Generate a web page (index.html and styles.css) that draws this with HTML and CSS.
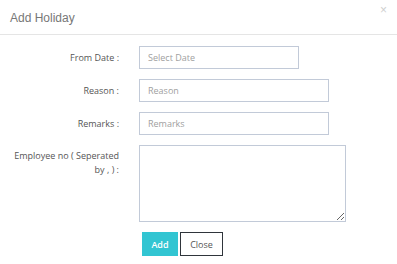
FILE: index.html
```
<!DOCTYPE html>
<html lang="en">
<head>
    <meta charset="UTF-8">
    <title>Add Holiday</title>
    <link rel="stylesheet" href="styles.css">
</head>
<body>

    <div class="modal">
        <div class="modal-header">
            <h4 class="modal-title">Add Holiday</h4>
            <button class="close" type="button">&times;</button>
        </div>

        <form class="modal-body">
            <label class="form-label">From Date :</label>
            <input class="form-input date" type="text" placeholder="Select Date">

            <label class="form-label">Reason :</label>
            <input class="form-input wide" type="text" placeholder="Reason">

            <label class="form-label">Remarks :</label>
            <input class="form-input wide" type="text" placeholder="Remarks">

            <label class="form-label top">Employee no ( Seperated by , ) :</label>
            <textarea class="form-input area"></textarea>

            <div></div>
            <div class="actions">
                <button class="btn btn-add" type="button">Add</button>
                <button class="btn btn-close" type="button">Close</button>
            </div>
        </form>
    </div>

</body>
</html>
```

FILE: styles.css
```
body {
    margin: 0;
    background: #fff;
    font-family: 'Open Sans', sans-serif;
    color: #555;
}

.modal-header {
    display: flex;
    justify-content: space-between;
    align-items: flex-start;
    height: 35px;
    box-sizing: border-box;
    padding: 0 10px;
    border-bottom: 1px solid #e5e5e5;
}

.modal-title {
    margin: 0;
    padding-top: 11px;
    font-family: 'Liberation Sans', sans-serif;
    font-weight: normal;
    font-size: 12px;
    color: #777;
}

.close {
    margin-top: 4px;
    padding: 0;
    border: none;
    background: none;
    font-family: 'Liberation Sans', sans-serif;
    font-size: 12px;
    line-height: 13px;
    color: #cfcfcf;
}

.modal-body {
    display: grid;
    grid-template-columns: 112px auto;
    column-gap: 20px;
    row-gap: 10px;
    align-items: center;
    padding: 11px 7px 0;
}

.form-label {
    text-align: right;
    font-size: 9px;
    line-height: 14px;
    color: #555;
}

.form-label.top {
    align-self: start;
    padding-top: 4px;
}

.form-input {
    box-sizing: border-box;
    height: 23px;
    padding: 0 8px;
    border: 1px solid #c2cad8;
    border-radius: 0;
    font-family: 'Open Sans', sans-serif;
    font-size: 9px;
    color: #555;
    outline: none;
}

.form-input::placeholder {
    color: #a0a0a0;
}

.date {
    width: 160px;
}

.wide {
    width: 190px;
}

.area {
    width: 207px;
    height: 77px;
    resize: both;
}

.actions {
    display: flex;
    gap: 2px;
    padding-left: 3px;
}

.btn {
    height: 24px;
    padding: 0;
    border: none;
    border-radius: 0;
    font-family: 'Open Sans', sans-serif;
    font-size: 9px;
    cursor: pointer;
}

.btn-add {
    width: 36px;
    background: #32c5d2;
    color: #fff;
    font-weight: 600;
}

.btn-close {
    width: 43px;
    background: #fff;
    border: 1px solid #2f353b;
    color: #555;
}
```
